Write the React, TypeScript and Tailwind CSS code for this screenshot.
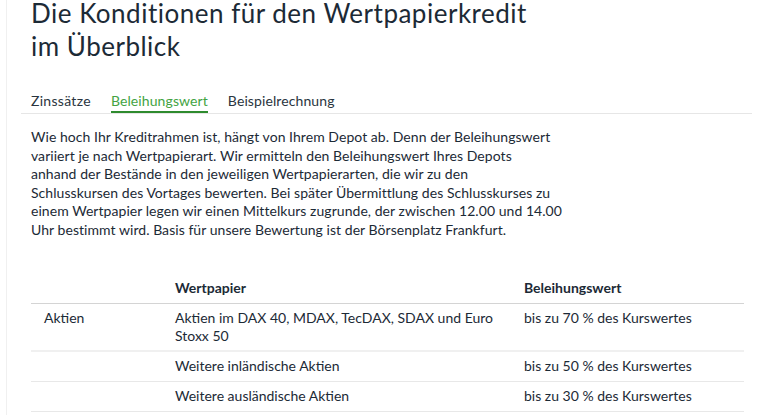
import React from "react";

const rows = [
  { cat: "Aktien", wp: ["Aktien im DAX 40, MDAX, TecDAX, SDAX und Euro", "Stoxx 50"], bw: "bis zu 70 % des Kurswertes" },
  { cat: "", wp: ["Weitere inländische Aktien"], bw: "bis zu 50 % des Kurswertes" },
  { cat: "", wp: ["Weitere ausländische Aktien"], bw: "bis zu 30 % des Kurswertes" },
];

const para = [
  "Wie hoch Ihr Kreditrahmen ist, hängt von Ihrem Depot ab. Denn der Beleihungswert",
  "variiert je nach Wertpapierart. Wir ermitteln den Beleihungswert Ihres Depots",
  "anhand der Bestände in den jeweiligen Wertpapierarten, die wir zu den",
  "Schlusskursen des Vortages bewerten. Bei später Übermittlung des Schlusskurses zu",
  "einem Wertpapier legen wir einen Mittelkurs zugrunde, der zwischen 12.00 und 14.00",
  "Uhr bestimmt wird. Basis für unsere Bewertung ist der Börsenplatz Frankfurt.",
];

export default function App() {
  return (
    <div className="w-[770px] h-[415px] overflow-hidden bg-white" style={{ fontFamily: "Lato, 'Open Sans', sans-serif" }}>
      <div className="ml-[6px] border-l border-[#f0f0f0] h-full pl-[14px] pr-[18px]">
        <h1 className="pl-[10px] text-[26px] tracking-[0.5px] text-[#1c2a36] whitespace-nowrap">
          <span className="block leading-[27px]">Die Konditionen für den Wertpapierkredit</span>
          <span className="block leading-[33px] mt-[3px]">im Überblick</span>
        </h1>
        <div className="mt-[29px] flex items-end gap-[20px] pl-[10px] border-b border-[#e6e6e6] text-[14px] leading-[18px] tracking-[0.1px] text-[#2a3540]">
          <div className="pb-[3px] tracking-[0.3px]">Zinssätze</div>
          <div className="pb-[1px] text-[#43a343] border-b-2 border-[#2e8b2e]">Beleihungswert</div>
          <div className="pb-[3px]">Beispielrechnung</div>
        </div>
        <p className="pl-[10px] mt-[14px] text-[14px] leading-[18.6px] tracking-[0.05px] text-[#1c2a36] whitespace-nowrap">
          {para.map((l, i) => (
            <React.Fragment key={i}>
              {l}
              {i < para.length - 1 && <br />}
            </React.Fragment>
          ))}
        </p>
        <div className="ml-[10px] w-[713px] mt-[39px] text-[14px] leading-[18px] text-[#1c2a36]">
          <div className="grid grid-cols-[144px_349px_1fr] border-b border-[#d4d4d4] pb-[6px] font-bold">
            <div />
            <div>Wertpapier</div>
            <div>Beleihungswert</div>
          </div>
          {rows.map((r, i) => (
            <div
              key={i}
              className={
                i === 0
                  ? "grid grid-cols-[144px_349px_1fr] border-b-2 border-[#f0f0f0] pt-[5px] pb-[5px]"
                  : "grid grid-cols-[144px_349px_1fr] border-b border-[#e8e8e8] pt-[5px] pb-[6px]"
              }
            >
              <div className="pl-[13px]">{r.cat}</div>
              <div>
                {r.wp.map((w, j) => (
                  <div key={j}>{w}</div>
                ))}
              </div>
              <div>{r.bw}</div>
            </div>
          ))}
        </div>
      </div>
    </div>
  );
}
